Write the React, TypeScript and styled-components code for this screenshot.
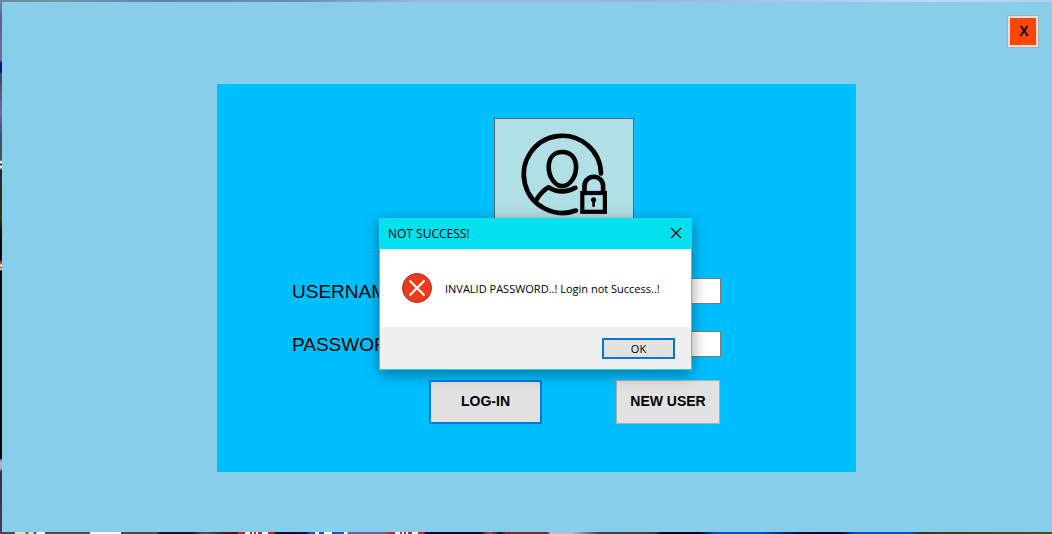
import React from "react";
import styled, { createGlobalStyle } from "styled-components";

const GlobalStyle = createGlobalStyle`
  *, *::before, *::after { box-sizing: border-box; }
  body { margin: 0; font-family: "Liberation Sans", Arial, sans-serif; color: #000; }
  button { font-family: inherit; color: inherit; cursor: pointer; }
`;

const Desktop = styled.div`
  min-height: 100vh;
  display: flex;
  padding: 2px 0 2px 2px;
  background:
    linear-gradient(90deg, #53405a 0 15px, #f4e2a0 15px 25px, #2f8a68 26px 28px, #d8e8dc 29px 33px, #3a7a60 34px 36px,
      #fff 37px 45px, #574455 45px 90px, #fff 90px 121px,
      #514252 121px 156px, #14121f 160px 190px, #5c4a63 204px, #551414 225px 238px, #ee1020 238px 245px,
      #fff 245px 250px, #ee1020 250px 252px, #fff 252px 254px, #ee1020 254px 256px, #fff 256px 258px,
      #ee1020 258px 262px, #fff 262px 268px, #ee1020 268px 274px,
      #09093a 275px, #100b66 308px, #1557c0 309px 315px, #fff 315px 319px, #1557c0 319px 324px, #fff 324px 332px,
      #1557c0 332px 344px, #fff 344px 347px, #6562a0 348px 385px, #ee1020 388px 395px, #fff 395px 400px,
      #ee1020 400px 402px, #fff 402px 404px, #ee1020 404px 406px, #fff 406px 408px, #ee1020 408px 412px,
      #fff 412px 418px, #ee1020 418px 424px, #060636 425px 480px, #a84850 490px, #111 500px, #7c2630 506px 548px,
      #c8b8dc 550px 570px, #3c3c50 600px, #35402f 655px, #03032c 662px 700px, #0a4cc8 715px 760px,
      #05053a 805px 840px, #0a4cc8 855px 910px, #38301f 920px, #4a4a18 100%) bottom / 100% 2px no-repeat,
    linear-gradient(90deg, #73859c 0, #7795a4 60px, #687fb2 160px, #7088b8 300px, #a4b2e4 420px, #9fb0e0 650px,
      #b4c4ee 800px, #c5d5f4 930px, #b8ccee 100%) top / 100% 2px no-repeat,
    linear-gradient(180deg, #74839c 0, #5c5c9c 20px, #75699c 60px, #10107c 63px 71px, #3d4858 74px, #70699c 110px,
      #3d4c68 140px, #4c5548 160px, #fff 162px 163px, #222 164px 165px, #fff 166px 167px, #24282c 170px, #2c3810 215px,
      #050505 240px 260px, #c05010 262px 264px, #fff 265px 266px, #c05010 267px 268px, #fff 269px, #050505 271px 458px,
      #b0a8dc 461px 468px, #3a2c44 472px, #4a3c54 100%) left / 2px 100% no-repeat,
    #87ceeb;
`;

const AppWindow = styled.main`
  flex: 1;
  display: flex;
  flex-direction: column;
  gap: 36px;
  padding-bottom: 60px;
  background: #87ceeb;
`;

const WindowBar = styled.header`
  display: flex;
  justify-content: flex-end;
  padding: 13px 13px 0 0;
`;

const CloseButton = styled.button`
  width: 32px;
  height: 33px;
  padding: 0 0 2px 2px;
  border: 1px solid #adadad;
  background: #ff4500;
  box-shadow: inset 0 0 0 2px #e1e1e1;
  font-size: 14px;
  font-weight: 700;
`;

const Stage = styled.div`
  display: grid;
  grid-template-columns: 215fr minmax(639px, 639fr) 196fr;
`;

const LoginPanel = styled.section`
  grid-column: 2;
  position: relative;
  padding: 34px 135px 48px 75px;
  background: #00bfff;
`;

const LoginForm = styled.form`
  display: flex;
  flex-direction: column;
`;

const Portrait = styled.div`
  display: flex;
  justify-content: center;
  width: 140px;
  height: 130px;
  margin: 0 0 30px 202px;
  border: 1px solid #646464;
  background: #b0e0e6;
`;

const Fields = styled.div`
  display: grid;
  row-gap: 27px;
  margin-bottom: 23px;
`;

const Field = styled.div`
  display: grid;
  grid-template-columns: 137px 1fr;
  height: 26px;
`;

const FieldLabel = styled.label`
  font-size: 19px;
  line-height: 28px;
`;

const TextBox = styled.input`
  width: 100%;
  min-width: 0;
  height: 26px;
  padding: 2px 4px;
  border: 1px solid #7a7a7a;
  background: #fff;
  font: 16px "Liberation Sans", Arial, sans-serif;
  outline: none;
`;

const Actions = styled.div`
  display: flex;
  justify-content: space-between;
  padding: 0 1px 0 137px;
`;

const ActionButton = styled.button<{ $active?: boolean }>`
  width: ${(p) => (p.$active ? "113px" : "104px")};
  height: 44px;
  padding: 0 0 2px;
  border: ${(p) => (p.$active ? "2px solid #0078d7" : "1px solid #adadad")};
  background: #e1e1e1;
  font-size: 14px;
  font-weight: 700;
  white-space: nowrap;
`;

const Dialog = styled.div`
  position: absolute;
  top: 134px;
  left: 162px;
  width: 313px;
  border: 1px solid #1cd9e8;
  background: #fff;
  box-shadow: 0 4px 14px rgba(0, 0, 0, 0.42);
  font-family: "Open Sans", "Noto Sans", sans-serif;
  font-size: 12px;
`;

const DialogBar = styled.div`
  display: flex;
  align-items: center;
  justify-content: space-between;
  height: 30px;
  padding: 0 9px 2px 8px;
  background: #03e0ee;
`;

const DialogTitle = styled.h2`
  margin: 0;
  font-size: 12px;
  font-weight: 400;
`;

const DialogClose = styled.button`
  display: flex;
  padding: 0;
  border: 0;
  background: none;
`;

const DialogBody = styled.div`
  display: flex;
  align-items: center;
  gap: 13px;
  height: 78px;
  padding: 0 22px;
`;

const DialogText = styled.p`
  margin: 0;
  font-size: 11px;
  white-space: nowrap;
`;

const DialogFooter = styled.div`
  display: flex;
  justify-content: flex-end;
  padding: 11px 16px 10px;
  background: #f0f0f0;
`;

const OkButton = styled.button`
  width: 73px;
  height: 21px;
  padding: 0;
  border: 2px solid #0078d7;
  background: #e1e1e1;
  font-size: 11px;
  line-height: 17px;
`;

const UserLockIcon = () => (
  <svg width="138" height="104" viewBox="0 0 138 104" fill="none" stroke="#000" strokeWidth="4.6" strokeLinecap="round" strokeLinejoin="round" aria-hidden="true">
    <path d="M106 54.500A38.600 38.600 0 1 0 81 91.500" />
    <path d="M67.300 33c-9 0-13.600 6.500-13.600 15.300 0 9.500 6.200 18.800 13.600 18.800s13.800-9.300 13.800-18.800c0-8.800-4.800-15.300-13.800-15.300z" />
    <path d="M41 81.500c3.500-6 7.500-10.500 12.500-13.300 8.500 5.200 18 5.500 26.900.600" />
    <path d="M89.500 73.500v-6.500a9.300 9.300 0 0 1 18.600 0v6.500" strokeLinecap="butt" />
    <rect x="87.300" y="74" width="22.600" height="18.800" strokeWidth="4.200" strokeLinejoin="miter" />
    <circle cx="98.600" cy="80.800" r="2.600" fill="#000" stroke="none" />
    <path d="M98.600 81v5.800" strokeWidth="2.600" />
  </svg>
);

const ErrorIcon = () => (
  <svg width="30" height="30" viewBox="0 0 30 30" aria-hidden="true">
    <circle cx="15" cy="15" r="14.500" fill="#f03a17" stroke="#a9301b" />
    <path d="M7.500 7.500l15 15M22.500 7.500l-15 15" stroke="#fff" strokeWidth="2.200" />
  </svg>
);

const CrossIcon = () => (
  <svg width="12" height="12" viewBox="0 0 12 12" aria-hidden="true">
    <path d="M1 1l10 10M11 1L1 11" stroke="#000" strokeWidth="1.100" />
  </svg>
);

export default function App() {
  return (
    <>
      <GlobalStyle />
      <Desktop>
        <AppWindow>
          <WindowBar>
            <CloseButton type="button">X</CloseButton>
          </WindowBar>
          <Stage>
            <LoginPanel>
              <LoginForm onSubmit={(e) => e.preventDefault()}>
                <Portrait>
                  <UserLockIcon />
                </Portrait>
                <Fields>
                  <Field>
                    <FieldLabel htmlFor="username">USERNAME</FieldLabel>
                    <TextBox id="username" type="text" />
                  </Field>
                  <Field>
                    <FieldLabel htmlFor="password">PASSWORD</FieldLabel>
                    <TextBox id="password" type="password" />
                  </Field>
                </Fields>
                <Actions>
                  <ActionButton type="submit" $active>LOG-IN</ActionButton>
                  <ActionButton type="button">NEW USER</ActionButton>
                </Actions>
              </LoginForm>
              <Dialog role="alertdialog" aria-labelledby="dialog-title" aria-describedby="dialog-text">
                <DialogBar>
                  <DialogTitle id="dialog-title">NOT SUCCESS!</DialogTitle>
                  <DialogClose type="button" aria-label="Close">
                    <CrossIcon />
                  </DialogClose>
                </DialogBar>
                <DialogBody>
                  <ErrorIcon />
                  <DialogText id="dialog-text">INVALID PASSWORD..! Login not Success..!</DialogText>
                </DialogBody>
                <DialogFooter>
                  <OkButton type="button">OK</OkButton>
                </DialogFooter>
              </Dialog>
            </LoginPanel>
          </Stage>
        </AppWindow>
      </Desktop>
    </>
  );
}
